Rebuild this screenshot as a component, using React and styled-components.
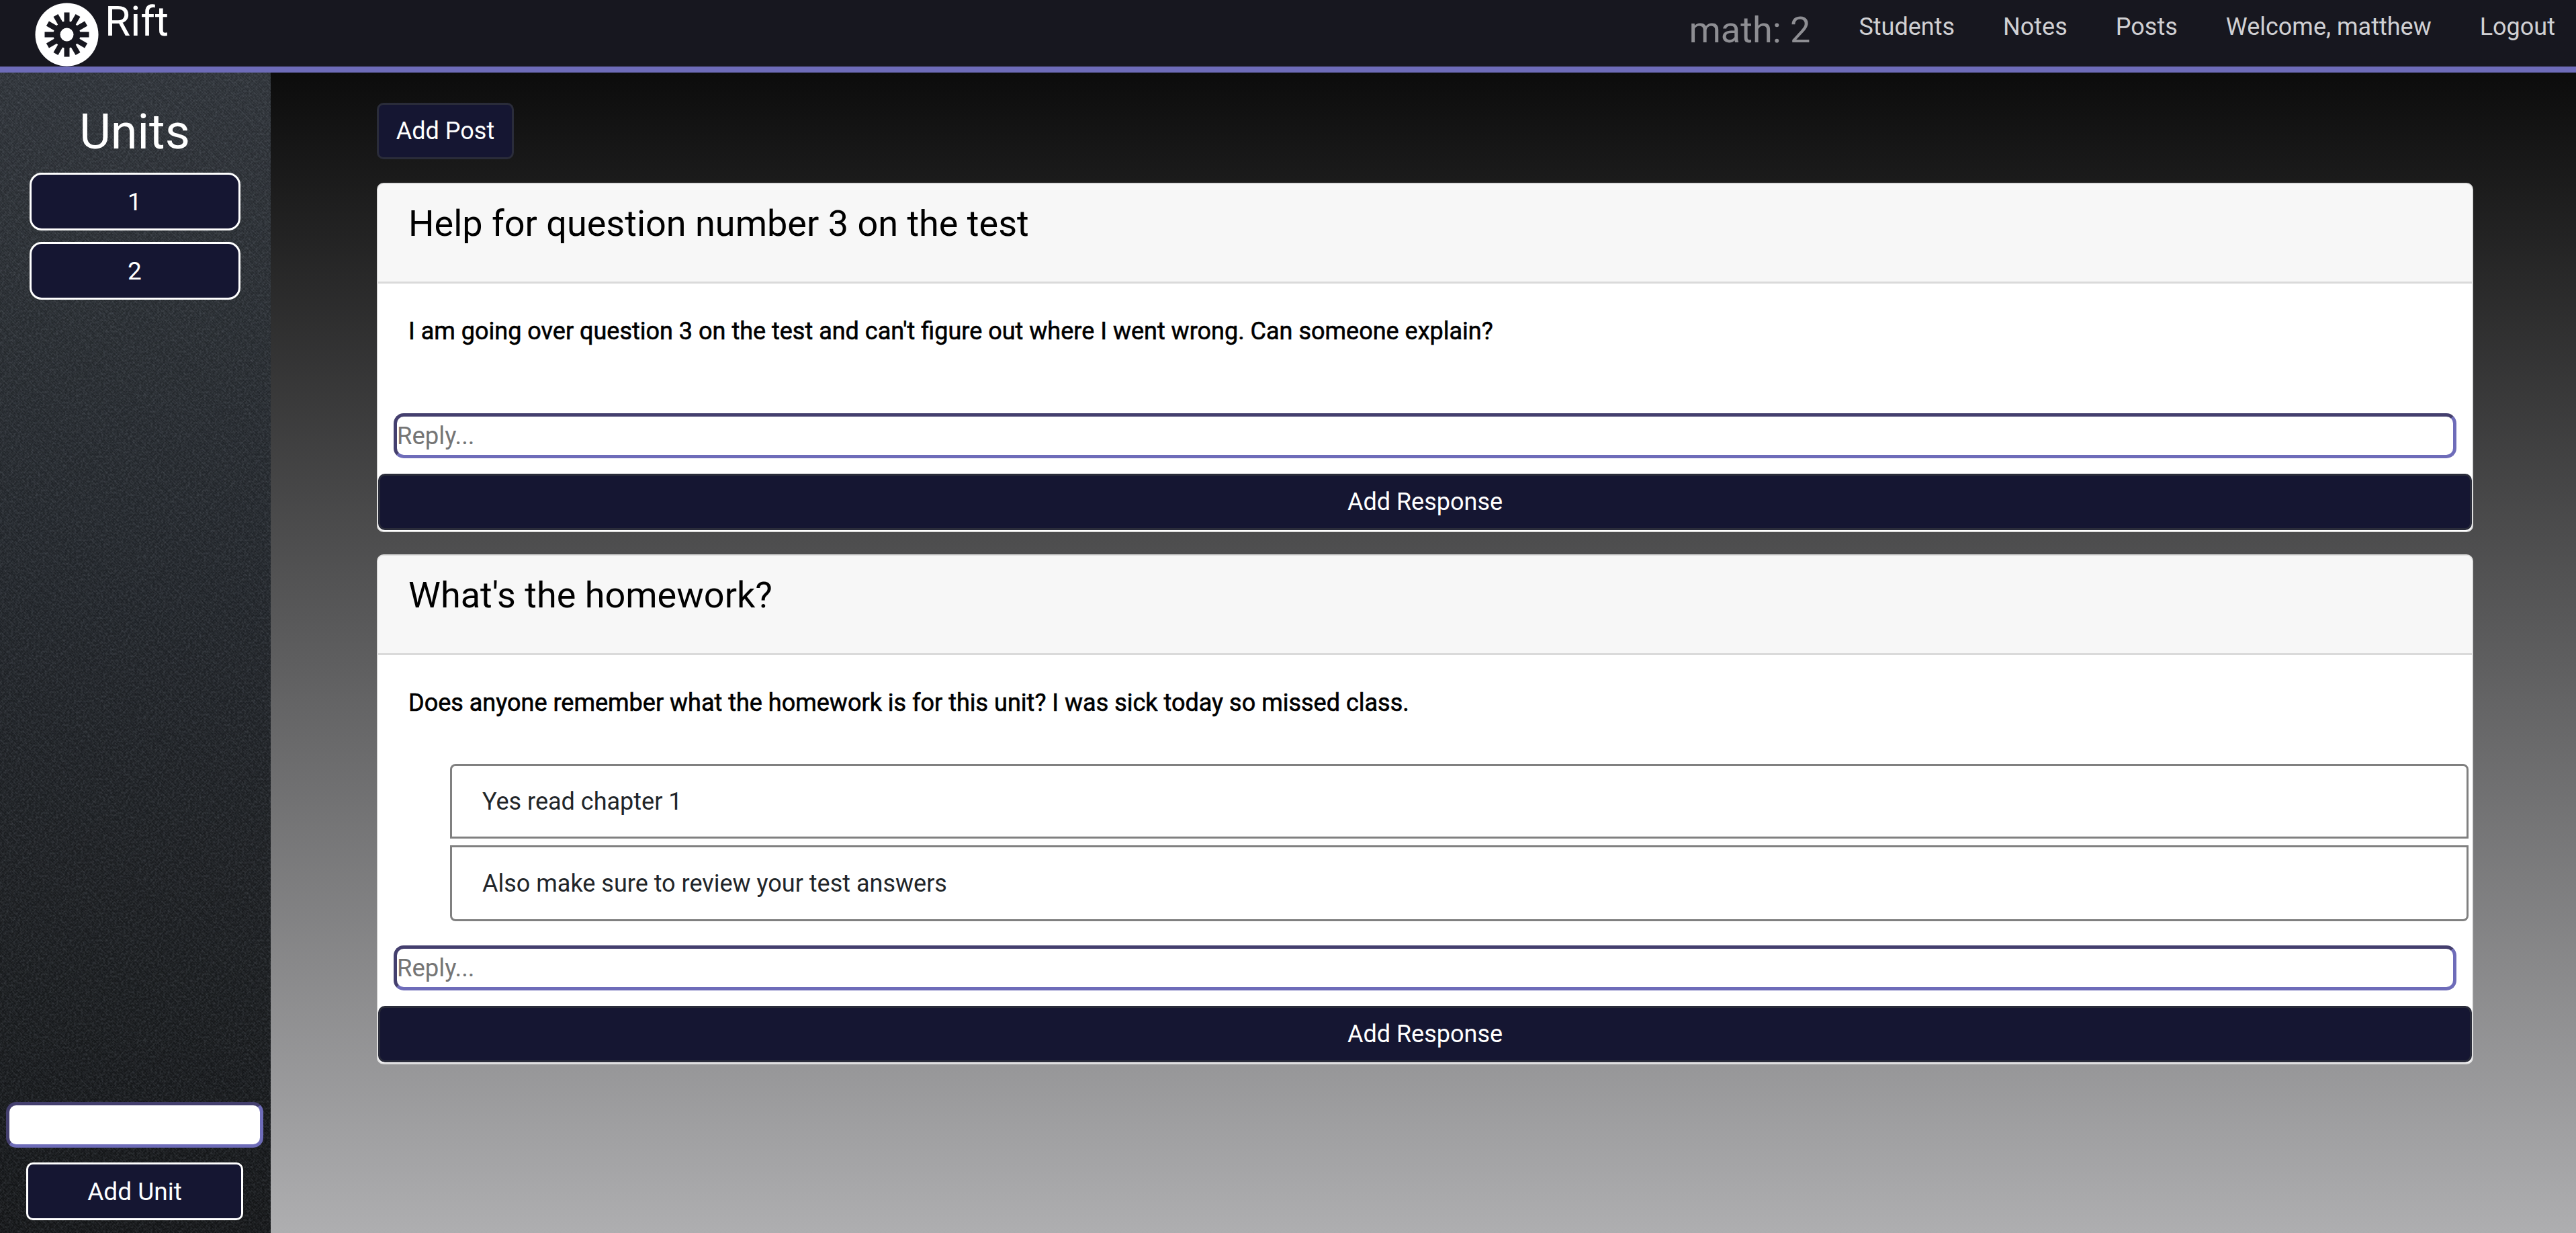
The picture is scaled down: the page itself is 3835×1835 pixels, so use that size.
import React from 'react';
import styled, { createGlobalStyle } from 'styled-components';

const GlobalStyle = createGlobalStyle`
  html, body, #root {
    margin: 0;
    height: 100%;
  }
  body {
    font-family: Roboto, "Liberation Sans", sans-serif;
    background: #0c0c0c;
  }
  * {
    box-sizing: border-box;
  }
`;

// mottled cloth look of the sidebar, a vector filter and no raster
const noise = `url("data:image/svg+xml,%3Csvg xmlns='http://www.w3.org/2000/svg' width='240' height='240'%3E%3Cfilter id='n'%3E%3CfeTurbulence type='fractalNoise' baseFrequency='0.3' numOctaves='2' stitchTiles='stitch'/%3E%3CfeColorMatrix values='0 0 0 0 0.42 0 0 0 0 0.47 0 0 0 0 0.55 1.4 0 0 0 -0.55'/%3E%3C/filter%3E%3Crect width='240' height='240' filter='url(%23n)' opacity='0.24'/%3E%3C/svg%3E")`;

const Page = styled.div`
  display: flex;
  flex-direction: column;
  height: 100vh;
  overflow: hidden;
`;

const Navbar = styled.nav`
  display: flex;
  align-items: flex-start;
  justify-content: space-between;
  flex: none;
  height: 108px;
  padding: 0 31px 0 52px;
  background: #17171f;
  border-bottom: 9px solid #6e6cb9;
`;

const Brand = styled.div`
  display: flex;
  align-items: flex-start;
  padding-top: 4px;
  gap: 9px;
`;

const BrandName = styled.span`
  color: #fff;
  font-size: 62px;
  line-height: 56px;
`;

const NavLinks = styled.div`
  display: flex;
  align-items: flex-start;
  gap: 72px;
`;

const Course = styled.span`
  margin-top: 10px;
  color: #8e8e93;
  font-size: 54px;
  line-height: 70px;
`;

const NavLink = styled.a`
  margin-top: 16px;
  color: #d0d0d3;
  font-size: 36px;
  line-height: 48px;
`;

const Body = styled.div`
  display: flex;
  flex: 1;
  min-height: 0;
`;

const Sidebar = styled.aside`
  display: flex;
  flex-direction: column;
  align-items: center;
  flex: none;
  width: 403px;
  padding: 37px 2px 19px 0;
  background:
    ${noise},
    repeating-linear-gradient(45deg, rgba(255, 255, 255, 0.02) 0 1px, rgba(0, 0, 0, 0.08) 1px 3px),
    repeating-linear-gradient(-45deg, rgba(255, 255, 255, 0.015) 0 1px, rgba(0, 0, 0, 0.05) 1px 3px),
    linear-gradient(180deg, #30353b 0%, #23272c 45%, #141618 100%);
`;

const SidebarTitle = styled.h2`
  margin: 0 0 8px;
  color: #fff;
  font-size: 72px;
  font-weight: 400;
  line-height: 104px;
`;

const UnitButton = styled.button`
  width: 314px;
  height: 86px;
  margin-bottom: 17px;
  color: #fff;
  background: #151632;
  border: 3px solid #fff;
  border-radius: 18px;
  font: inherit;
  font-size: 37px;
`;

const UnitForm = styled.div`
  display: flex;
  flex-direction: column;
  align-items: center;
  gap: 22px;
  margin-top: auto;
`;

const UnitInput = styled.input`
  width: 383px;
  height: 68px;
  background: #fff;
  border-style: solid;
  border-width: 5px;
  border-color: #443f6e #6e6cb9 #6e6cb9 #443f6e;
  border-radius: 15px;
`;

const AddUnitButton = styled.button`
  width: 323px;
  height: 86px;
  color: #fff;
  background: #151632;
  border: 3px solid #fff;
  border-radius: 10px;
  font: inherit;
  font-size: 37px;
`;

const Main = styled.main`
  flex: 1;
  padding: 45px 153px 0 158px;
  background: linear-gradient(180deg, #0c0c0c 0%, #aeaeb0 100%);
`;

const AddPostButton = styled.button`
  display: block;
  width: 204px;
  height: 84px;
  margin-bottom: 35px;
  color: #fff;
  background: #151632;
  border: 3px solid #2a2c3a;
  border-radius: 10px;
  font: inherit;
  font-size: 36px;
`;

const Card = styled.section`
  margin-bottom: 33px;
  padding-bottom: 1px;
  background: #fff;
  border: 2px solid #dfdfdf;
  border-radius: 10px;
`;

const CardHeader = styled.header`
  height: 148px;
  padding: 23px 45px 0;
  background: #f7f7f7;
  border-bottom: 3px solid #dadada;
  border-radius: 8px 8px 0 0;
`;

const CardTitle = styled.h3`
  margin: 0;
  color: #000;
  font-size: 54px;
  font-weight: 400;
  line-height: 72px;
`;

const CardBody = styled.div`
  padding: 47px 45px 0;
`;

const PostText = styled.p`
  margin: 0;
  min-height: 146px;
  color: #000;
  font-size: 36px;
  font-weight: 400;
  line-height: 48px;
  -webkit-text-stroke: 0.6px #000;
`;

const Responses = styled.div`
  display: flex;
  flex-direction: column;
  gap: 10px;
  margin: -31px 5px 36px 107px;
`;

const Response = styled.div`
  display: flex;
  align-items: center;
  height: ${props => (props.$tall ? 113 : 111)}px;
  padding: 0 45px;
  color: #212529;
  font-size: 36px;
  border: 3px solid #808080;
  border-radius: ${props => (props.$last ? '0 0 8px 8px' : '8px 8px 0 0')};
`;

const ReplyInput = styled.input`
  display: block;
  width: calc(100% - 46px);
  height: 67px;
  margin: 0 0 23px 23px;
  padding: 0;
  font: inherit;
  font-size: 36.5px;
  background: #fff;
  border-style: solid;
  border-width: 5px;
  border-color: #443f6e #6e6cb9 #6e6cb9 #443f6e;
  border-radius: 15px;
  outline: none;

  &::placeholder {
    color: #757575;
  }
`;

const ResponseButton = styled.button`
  display: block;
  width: 100%;
  height: 84px;
  color: #fff;
  background: #151632;
  border: 3px solid #2a2c3a;
  border-radius: 10px;
  font: inherit;
  font-size: 36px;
`;

const Logo = () => {
  const spokes = Array.from({ length: 12 }, (_, i) => i * 30);
  return (
    <svg width="95" height="95" viewBox="0 0 95 95">
      <circle cx="47.5" cy="47.5" r="47" fill="#fff" />
      <circle cx="47.5" cy="47.5" r="20" fill="#17171f" />
      <circle cx="47.5" cy="47.5" r="10" fill="#fff" />
      {spokes.map(angle => (
        <rect
          key={angle}
          x="43.5"
          y="14.5"
          width="8"
          height="18"
          fill="#17171f"
          transform={`rotate(${angle} 47.5 47.5)`}
        />
      ))}
    </svg>
  );
};

const posts = [
  {
    title: 'Help for question number 3 on the test',
    text: "I am going over question 3 on the test and can't figure out where I went wrong. Can someone explain?",
    responses: [],
  },
  {
    title: "What's the homework?",
    text: 'Does anyone remember what the homework is for this unit? I was sick today so missed class.',
    responses: ['Yes read chapter 1', 'Also make sure to review your test answers'],
  },
];

const App = () => {
  return (
    <Page>
      <GlobalStyle />
      <Navbar>
        <Brand>
          <Logo />
          <BrandName>Rift</BrandName>
        </Brand>
        <NavLinks>
          <Course>math: 2</Course>
          <NavLink>Students</NavLink>
          <NavLink>Notes</NavLink>
          <NavLink>Posts</NavLink>
          <NavLink>Welcome, matthew</NavLink>
          <NavLink>Logout</NavLink>
        </NavLinks>
      </Navbar>
      <Body>
        <Sidebar>
          <SidebarTitle>Units</SidebarTitle>
          <UnitButton>1</UnitButton>
          <UnitButton>2</UnitButton>
          <UnitForm>
            <UnitInput />
            <AddUnitButton>Add Unit</AddUnitButton>
          </UnitForm>
        </Sidebar>
        <Main>
          <AddPostButton>Add Post</AddPostButton>
          {posts.map(post => (
            <Card key={post.title}>
              <CardHeader>
                <CardTitle>{post.title}</CardTitle>
              </CardHeader>
              <CardBody>
                <PostText>{post.text}</PostText>
              </CardBody>
              {post.responses.length > 0 && (
                <Responses>
                  {post.responses.map((response, i) => (
                    <Response key={response} $last={i === post.responses.length - 1} $tall={i > 0}>
                      {response}
                    </Response>
                  ))}
                </Responses>
              )}
              <ReplyInput placeholder="Reply..." />
              <ResponseButton>Add Response</ResponseButton>
            </Card>
          ))}
        </Main>
      </Body>
    </Page>
  );
};

export default App;
